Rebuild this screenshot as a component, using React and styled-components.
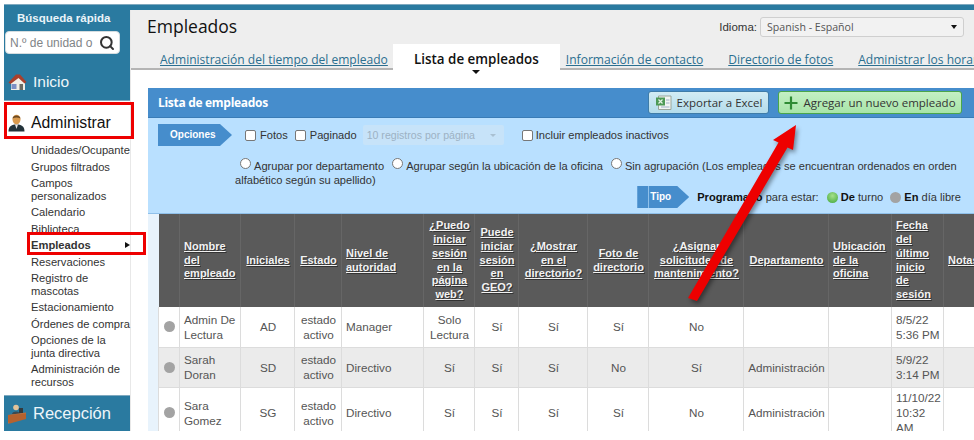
import React from "react";
import styled, { createGlobalStyle } from "styled-components";
import { Search } from "lucide-react";

const GlobalStyle = createGlobalStyle`
  html, body {
    margin: 0;
    background: #fff;
    font-family: "Liberation Sans", Arial, sans-serif;
  }
  * { box-sizing: border-box; }
`;

const columns = [
  { w: 21, label: "" },
  { w: 61, label: "Nombre del empleado", left: true },
  { w: 54, label: "Iniciales" },
  { w: 47, label: "Estado" },
  { w: 82, label: "Nivel de autoridad", left: true },
  { w: 51, label: "¿Puedo iniciar sesión en la página web?" },
  { w: 44, label: "Puede iniciar sesión en GEO?" },
  { w: 69, label: "¿Mostrar en el directorio?" },
  { w: 61, label: "Foto de directorio" },
  { w: 95, label: "¿Asignar solicitudes de mantenimiento?" },
  { w: 85, label: "Departamento" },
  { w: 63, label: "Ubicación de la oficina", left: true },
  { w: 52, label: "Fecha del último inicio de sesión", left: true },
  { w: 60, label: "Notas", left: true },
];

const rows = [
  { cells: ["Admin De Lectura", "AD", "estado activo", "Manager", "Solo Lectura", "Sí", "Sí", "Sí", "No", "", "", "8/5/22 5:36 PM", ""] },
  { cells: ["Sarah Doran", "SD", "estado activo", "Directivo", "Sí", "Sí", "Sí", "No", "Sí", "Administración", "", "5/9/22 3:14 PM", ""], alt: true },
  { cells: ["Sara Gomez", "SG", "estado activo", "Directivo", "Sí", "Sí", "Sí", "Sí", "No", "Administración", "", "11/10/22 10:32 AM", ""] },
];

const subItems = [
  "Grupos filtrados",
  "Campos personalizados",
  "Calendario",
  "Biblioteca",
];
const subItemsAfter = [
  "Reservaciones",
  "Registro de mascotas",
  "Estacionamiento",
  "Órdenes de compra",
  "Opciones de la junta directiva",
  "Administración de recursos",
];

const HouseIcon = () => (
  <svg width="19" height="18" viewBox="0 0 19 18">
    <path d="M3 9 L3 17 L17 17 L17 9 L10 3 Z" fill="#f1eee6" />
    <path d="M0.5 9.5 L8 1.5 L12 1.5 L18.5 9 L16.5 10.5 L10.5 5 L2.5 11 Z" fill="#a8402c" />
    <rect x="3.5" y="11" width="5" height="5" fill="#7d8fc4" />
    <rect x="11.5" y="11" width="3.5" height="6" fill="#6a6a62" />
  </svg>
);

const PersonIcon = () => (
  <svg width="17" height="18" viewBox="0 0 17 18">
    <path d="M0.5 17.5 C0.5 12 4 10.5 8.5 10.5 C13 10.5 16.5 12 16.5 17.5 Z" fill="#23333a" />
    <path d="M7 10.5 L10 10.5 L8.5 15 Z" fill="#e8e8e8" />
    <ellipse cx="8.5" cy="5.5" rx="4" ry="4.8" fill="#d99a4e" />
    <path d="M4.5 4.5 C5 0.5 12 0.5 12.5 4.5 C10 3 7 3 4.5 4.5 Z" fill="#6b4a24" />
  </svg>
);

const DeskIcon = () => (
  <svg width="20" height="20" viewBox="0 0 20 20">
    <circle cx="9" cy="3.5" r="2.8" fill="#e2c39a" />
    <path d="M5 10 C5 6.5 13 6.5 13 10 Z" fill="#3c4a52" />
    <rect x="12" y="4" width="4" height="5" fill="#33393c" />
    <path d="M1 11 L19 8.5 L19 11 L2 19.5 L1 19.5 Z" fill="#c6703a" />
    <path d="M1 11 L19 9.5 L19 15 L3 19.5 L1 18 Z" fill="#b5622f" />
  </svg>
);

const ExcelIcon = () => (
  <svg width="17" height="16" viewBox="0 0 17 16">
    <path d="M3.5 1 H16 V14.5 H3.5 Z" fill="#f2f5f2" stroke="#9aa59a" />
    <rect x="1" y="2.5" width="9" height="8" fill="#4e9a56" />
    <path d="M3.5 4.5 L7.5 8.5 M7.5 4.5 L3.5 8.5" stroke="#e6f3e6" strokeWidth="1.2" />
    <path d="M11 5 H14.5 M11 8 H14.5 M6 12 H14.5" stroke="#9fb0c6" />
  </svg>
);

const PlusIcon = () => (
  <svg width="14" height="14" viewBox="0 0 14 14">
    <path d="M7 0.5 V13.5 M0.5 7 H13.5" stroke="#2e8b34" strokeWidth="2.2" />
  </svg>
);

const Page = styled.div`
  position: relative;
  width: 974px;
  height: 431px;
  padding: 4px 0 0 4px;
  overflow: hidden;
  display: flex;
  flex-direction: column;
`;

const TopStrip = styled.div`
  height: 6px;
  flex: none;
  background: #2a7aa0;
  border-top: 1px solid #7fa9bf;
`;

const Body = styled.div`
  flex: 1;
  min-height: 0;
  display: flex;
`;

const Sidebar = styled.aside`
  width: 126px;
  flex: none;
  display: flex;
  flex-direction: column;
`;

const BlueBlock = styled.div`
  background: #2a7aa0;
  height: 91px;
  flex: none;
  border-bottom: 1px solid #7fa9bf;
  display: flex;
  flex-direction: column;
`;

const SearchTitle = styled.div`
  margin-top: 2px;
  padding-left: 13px;
  color: #eaf4f9;
  font-size: 11.5px;
  font-weight: 700;
  line-height: 13px;
`;

const SearchBox = styled.div`
  margin: 6px 0 0 1px;
  width: 115px;
  height: 23px;
  flex: none;
  background: #fff;
  border: 1px solid #d5dde0;
  border-radius: 4px;
  display: flex;
  align-items: center;
  justify-content: space-between;
  padding: 0 4px;
  color: #7f8487;
  font-size: 12px;
  white-space: nowrap;
  svg { flex: none; color: #333; }
`;

const MainNav = styled.div`
  flex: 1;
  display: flex;
  align-items: center;
  gap: 6px;
  padding: 9px 0 0 4px;
  color: #eef6fa;
  font-size: 15.5px;
`;

const AdminRow = styled.div`
  position: relative;
  height: 37px;
  flex: none;
  margin-top: 2px;
  display: flex;
  align-items: center;
  gap: 6px;
  padding: 3px 0 0 4px;
  color: #111;
  font-size: 15.8px;
`;

const RedFrame = styled.span`
  position: absolute;
  top: ${(p) => p.$top}px;
  left: ${(p) => p.$left}px;
  width: ${(p) => p.$w}px;
  height: ${(p) => p.$h}px;
  border: 3px solid #ee0000;
  pointer-events: none;
`;

const SubList = styled.ul`
  list-style: none;
  margin: 2px 0 0;
  padding: 0 0 0 27px;
  flex: 1;
  min-height: 0;
`;

const SubItem = styled.li`
  position: relative;
  padding: 2px 0;
  font-size: 11.2px;
  line-height: 12.5px;
  color: #333;
  font-weight: ${(p) => (p.$active ? 700 : 400)};
  ${(p) => p.$clip && "white-space: nowrap; overflow: hidden;"}
`;

const Caret = styled.span`
  position: absolute;
  left: 94px;
  top: 5px;
  border-left: 5px solid #111;
  border-top: 3.5px solid transparent;
  border-bottom: 3.5px solid transparent;
`;

const ReceptionBlock = styled.div`
  height: 36px;
  flex: none;
  background: #2a7aa0;
  border-top: 1px solid #7fa9bf;
  display: flex;
  align-items: center;
  gap: 6px;
  padding-left: 3px;
  color: #eef6fa;
  font-size: 16.5px;
`;

const Main = styled.main`
  flex: 1;
  min-width: 0;
  display: flex;
  flex-direction: column;
  border-left: 1px solid #e8e8e8;
`;

const Header = styled.header`
  height: 60px;
  flex: none;
  background: #eeeeee;
  border-bottom: 2px solid #b4b4b4;
  display: flex;
  flex-direction: column;
`;

const TitleRow = styled.div`
  height: 34px;
  flex: none;
  padding-left: 16px;
  display: flex;
  align-items: center;
  justify-content: space-between;
`;

const Title = styled.h1`
  margin: 0 0 2px;
  font-family: "Open Sans", sans-serif;
  font-size: 17.5px;
  font-weight: 400;
  color: #111;
`;

const LangGroup = styled.div`
  display: flex;
  align-items: center;
  gap: 3px;
  margin-right: 10px;
  font-size: 11.5px;
  color: #333;
`;

const LangSelect = styled.div`
  width: 204px;
  height: 20px;
  background: #f2f2f2;
  border: 1px solid #cfcfcf;
  border-radius: 3px;
  display: flex;
  align-items: center;
  justify-content: space-between;
  padding: 0 6px;
  font-family: "Open Sans", sans-serif;
  font-size: 10.6px;
  color: #555;
  &::after {
    content: "";
    border-top: 4px solid #111;
    border-left: 3.5px solid transparent;
    border-right: 3.5px solid transparent;
  }
`;

const TabRow = styled.nav`
  display: flex;
  align-items: flex-start;
  padding-left: 29px;
  white-space: nowrap;
  overflow: visible;
`;

const TabLink = styled.a`
  flex: none;
  margin-right: ${(p) => p.$gap}px;
  padding-top: 7px;
  font-family: "Open Sans", sans-serif;
  font-size: 12.05px;
  line-height: 17px;
  color: #2b6f90;
  text-decoration: underline;
`;

const ActiveTab = styled.div`
  position: relative;
  flex: none;
  width: 167px;
  height: 31px;
  margin: 0 6px 0 5px;
  background: #fff;
  padding-top: 7px;
  text-align: center;
  font-family: "Open Sans", sans-serif;
  font-size: 13.4px;
  line-height: 17px;
  font-weight: 600;
  color: #111;
  &::after {
    content: "";
    position: absolute;
    left: 79px;
    bottom: 1px;
    border-top: 4px solid #111;
    border-left: 4px solid transparent;
    border-right: 4px solid transparent;
  }
`;

const Panel = styled.section`
  margin: 18px 0 0 17px;
  flex: 1;
  min-height: 0;
  overflow: hidden;
  background: #e8f3fc;
`;

const PanelHead = styled.div`
  height: 30px;
  background: #468dcc;
  border-bottom: 1px solid #3a7cb6;
  display: flex;
  align-items: center;
  padding: 0 12px 0 10px;
`;

const PanelTitle = styled.div`
  flex: 1;
  color: #fff;
  font-family: "Open Sans", sans-serif;
  font-size: 12px;
  font-weight: 700;
  letter-spacing: -0.3px;
`;

const ActionButton = styled.button`
  height: 23px;
  width: ${(p) => p.$w}px;
  margin-left: ${(p) => p.$ml}px;
  padding: 0;
  border-radius: 3px;
  border: 1px solid ${(p) => (p.$green ? "#4aa64a" : "#3f7ca8")};
  background: ${(p) =>
    p.$green
      ? "linear-gradient(#c4f0c4, #a8e4a8)"
      : "linear-gradient(#d2ecf4, #b4dceb)"};
  display: flex;
  align-items: center;
  justify-content: center;
  gap: 5px;
  font-family: "Open Sans", sans-serif;
  font-size: 11.5px;
  color: #333;
`;

const Options = styled.div`
  height: 96px;
  background: #b9e0ff;
  border-bottom: 1px solid #8fc0ea;
  display: flex;
  flex-direction: column;
  color: #333;
  font-size: 11.1px;
`;

const OptionRow = styled.div`
  height: 22px;
  margin-top: 6px;
  flex: none;
  display: flex;
  align-items: center;
  padding-left: 10px;
`;

const ArrowTag = styled.div`
  width: ${(p) => p.$w}px;
  height: 22px;
  flex: none;
  background: ${(p) =>
    p.$split
      ? "linear-gradient(90deg, #468dcc 11px, #8fc0ea 11px, #8fc0ea 12px, #468dcc 12px)"
      : "#468dcc"};
  clip-path: polygon(0 0, calc(100% - 12px) 0, 100% 50%, calc(100% - 12px) 100%, 0 100%);
  color: #fff;
  font-size: 10px;
  font-weight: 700;
  line-height: 22px;
  padding-left: ${(p) => p.$pad}px;
`;

const Check = styled.span`
  width: 11px;
  height: 11px;
  flex: none;
  background: #fff;
  border: 1px solid #777;
  border-radius: 2px;
  margin: 0 ${(p) => p.$gap || 4}px 0 ${(p) => p.$ml}px;
`;

const FakeSelect = styled.div`
  width: 141px;
  height: 20px;
  margin-left: 6px;
  flex: none;
  background: #c7e3f9;
  border-radius: 2px;
  color: #9db2c4;
  display: flex;
  align-items: center;
  justify-content: space-between;
  padding: 0 8px 0 4px;
  font-size: 10.6px;
  &::after {
    content: "";
    border-top: 3px solid #a9c0d2;
    border-left: 3px solid transparent;
    border-right: 3px solid transparent;
  }
`;

const GroupText = styled.p`
  height: 28px;
  flex: none;
  margin: 12px 10px 0 87px;
  text-indent: 5px;
  line-height: 13.6px;
`;

const Radio = styled.span`
  display: inline-block;
  width: 11px;
  height: 11px;
  background: #fff;
  border: 1px solid #777;
  border-radius: 50%;
  margin-right: 3px;
  margin-left: ${(p) => p.$ml || 0}px;
  vertical-align: 1px;
`;

const TypeRow = styled.div`
  height: 22px;
  flex: none;
  display: flex;
  align-items: center;
  justify-content: flex-end;
  padding-right: 13px;
`;

const Legend = styled.div`
  margin-left: 8px;
  display: flex;
  align-items: center;
  white-space: nowrap;
  b { font-weight: 700; color: #111; }
`;

const Dot = styled.span`
  width: 11px;
  height: 11px;
  border-radius: 50%;
  margin: 0 3px 0 ${(p) => p.$ml}px;
  background: ${(p) =>
    p.$green ? "radial-gradient(circle at 50% 35%, #a6e08a, #3fa63a)" : "#a3a3a3"};
`;

const TableWrap = styled.div`
  padding-left: 10px;
`;

const Table = styled.table`
  table-layout: fixed;
  width: 845px;
  border-collapse: collapse;
  font-size: 11.7px;
`;

const Th = styled.th`
  width: ${(p) => p.$w}px;
  height: 93px;
  padding: 0 3px 0 4px;
  background: #5a5a5a;
  border-right: 1px solid #666;
  color: #f2f2f2;
  font-weight: 700;
  font-size: 11px;
  line-height: 13.7px;
  text-align: ${(p) => (p.$left ? "left" : "center")};
  text-decoration: underline;
  text-shadow: 1px 1px 0 #333;
`;

const Tr = styled.tr`
  background: ${(p) => (p.$alt ? "#ebebeb" : "#fff")};
`;

const Td = styled.td`
  height: ${(p) => p.$h}px;
  padding: 0 3px 0 4px;
  border: 1px solid #dcdcdc;
  border-top: none;
  color: #555;
  line-height: 15px;
  text-align: ${(p) => (p.$left ? "left" : "center")};
  vertical-align: middle;
`;

const StatusDot = styled.span`
  display: block;
  width: 11px;
  height: 11px;
  margin: 0 auto;
  border-radius: 50%;
  background: #a3a3a3;
`;

const ArrowSvg = styled.svg`
  position: absolute;
  left: 670px;
  top: 121px;
  filter: drop-shadow(2px 3px 2px rgba(0, 0, 0, 0.4));
`;

// anotacion roja encima de la tabla
const RedArrow = () => (
  <ArrowSvg width="130" height="190" viewBox="0 0 130 190">
    <polygon points="126,4 123,29 117.5,26.5 27,180 18,177 108.5,21.5 103,19" fill="#ee0000" />
  </ArrowSvg>
);

const App = () => {
  return (
    <Page>
      <GlobalStyle />
      <TopStrip />
      <Body>
        <Sidebar>
          <BlueBlock>
            <SearchTitle>Búsqueda rápida</SearchTitle>
            <SearchBox>
              N.º de unidad o
              <Search size={16} strokeWidth={3} />
            </SearchBox>
            <MainNav>
              <HouseIcon />
              Inicio
            </MainNav>
          </BlueBlock>
          <AdminRow>
            <PersonIcon />
            Administrar
            <RedFrame $top={-1} $left={0} $w={130} $h={37} />
          </AdminRow>
          <SubList>
            <SubItem $clip>Unidades/Ocupantes</SubItem>
            {subItems.map((item) => (
              <SubItem key={item}>{item}</SubItem>
            ))}
            <SubItem $active>
              Empleados
              <Caret />
              <RedFrame $top={-5} $left={-4} $w={119} $h={23} />
            </SubItem>
            {subItemsAfter.map((item) => (
              <SubItem key={item}>{item}</SubItem>
            ))}
          </SubList>
          <ReceptionBlock>
            <DeskIcon />
            Recepción
          </ReceptionBlock>
        </Sidebar>

        <Main>
          <Header>
            <TitleRow>
              <Title>Empleados</Title>
              <LangGroup>
                Idioma:
                <LangSelect>Spanish - Español</LangSelect>
              </LangGroup>
            </TitleRow>
            <TabRow>
              <TabLink>Administración del tiempo del empleado</TabLink>
              <ActiveTab>Lista de empleados</ActiveTab>
              <TabLink $gap={25}>Información de contacto</TabLink>
              <TabLink $gap={25}>Directorio de fotos</TabLink>
              <TabLink>Administrar los horarios</TabLink>
            </TabRow>
          </Header>

          <Panel>
            <PanelHead>
              <PanelTitle>Lista de empleados</PanelTitle>
              <ActionButton $w={121}>
                <ExcelIcon />
                Exportar a Excel
              </ActionButton>
              <ActionButton $w={184} $ml={9} $green>
                <PlusIcon />
                Agregar un nuevo empleado
              </ActionButton>
            </PanelHead>

            <Options>
              <OptionRow>
                <ArrowTag $w={74} $pad={12}>Opciones</ArrowTag>
                <Check $ml={13} />
                Fotos
                <Check $ml={7} />
                Paginado
                <FakeSelect>10 registros por página</FakeSelect>
                <Check $ml={18} $gap={3} />
                Incluir empleados inactivos
              </OptionRow>
              <GroupText>
                <Radio />
                Agrupar por departamento
                <Radio $ml={8} />
                Agrupar según la ubicación de la oficina
                <Radio $ml={8} />
                Sin agrupación (Los empleados se encuentran ordenados en orden alfabético según su apellido)
              </GroupText>
              <TypeRow>
                <ArrowTag $w={52} $pad={13} $split>Tipo</ArrowTag>
                <Legend>
                  <b>Programado</b>&nbsp;para estar:
                  <Dot $ml={8} $green />
                  <b>De</b>&nbsp;turno
                  <Dot $ml={7} />
                  <b>En</b>&nbsp;día libre
                </Legend>
              </TypeRow>
            </Options>

            <TableWrap>
              <Table>
                <thead>
                  <tr>
                    {columns.map((col, i) => (
                      <Th key={i} $w={col.w} $left={col.left}>
                        {col.label}
                      </Th>
                    ))}
                  </tr>
                </thead>
                <tbody>
                  {rows.map((row, r) => (
                    <Tr key={r} $alt={row.alt}>
                      <Td $h={r === 2 ? 51 : 40}>
                        <StatusDot />
                      </Td>
                      {row.cells.map((cell, c) => (
                        <Td key={c} $h={r === 2 ? 51 : 40} $left={columns[c + 1].left}>
                          {cell}
                        </Td>
                      ))}
                    </Tr>
                  ))}
                </tbody>
              </Table>
            </TableWrap>
          </Panel>
        </Main>
      </Body>
      <RedArrow />
    </Page>
  );
};

export default App;
